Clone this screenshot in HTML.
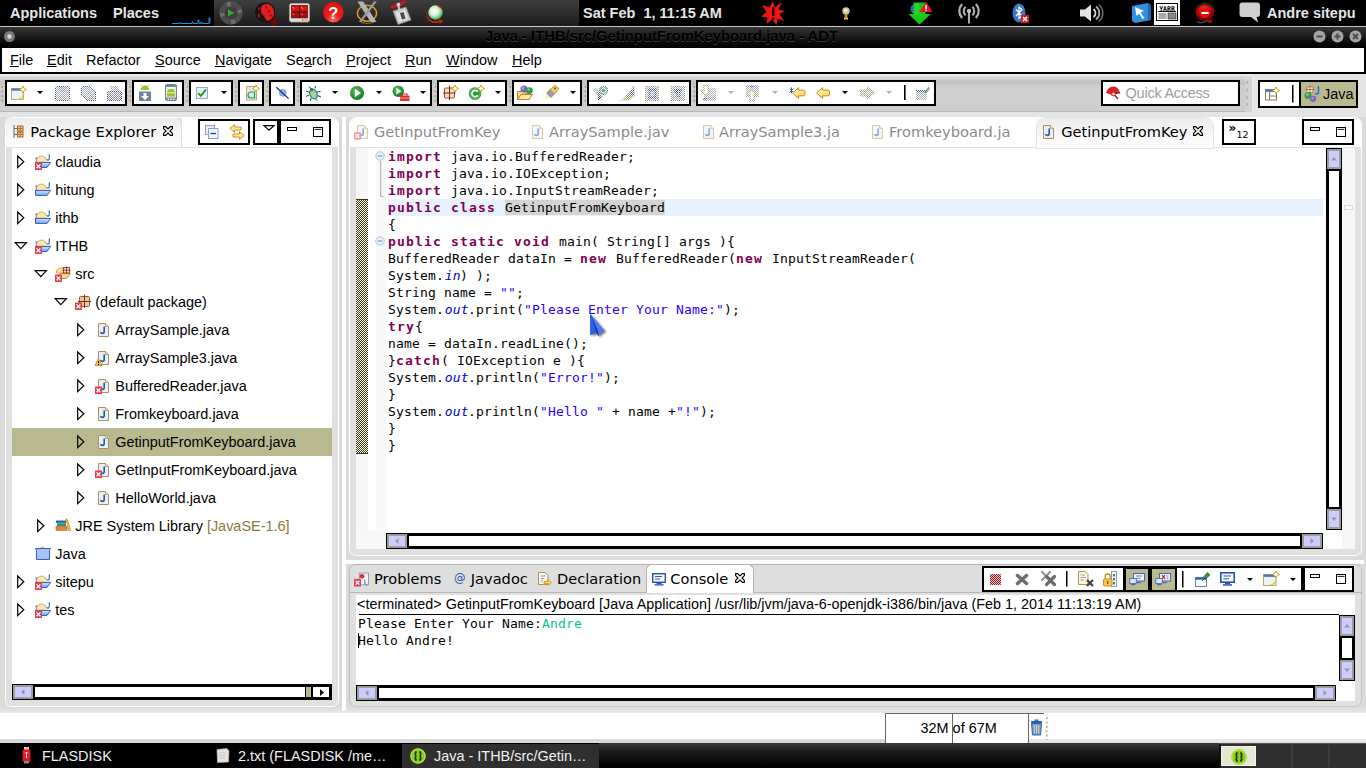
<!DOCTYPE html><html><head><meta charset="utf-8"><title>Java - ADT</title><style>
html,body{margin:0;padding:0;background:#e8e8e8;}
body{width:1366px;height:768px;overflow:hidden;position:relative;font-family:"Liberation Sans",sans-serif;font-size:15px;color:#000;}
div{position:absolute;box-sizing:border-box;}
svg{position:absolute;overflow:visible;}
.t{white-space:pre;line-height:1;}
.ui{font-family:"Liberation Sans",sans-serif;font-size:14.45px;}
.dj{font-family:"DejaVu Sans","Liberation Sans",sans-serif;font-size:15px;}
.mono{font-family:"DejaVu Sans Mono","Liberation Mono",monospace;font-size:13px;letter-spacing:0.174px;}
.bb{border:2px solid #000;background:#fff;}
.kw{color:#7f0055;font-weight:bold;letter-spacing:1.174px;}
.st{color:#2a00ff;}
.fi{color:#0000c0;font-style:italic;margin-left:0.7px;margin-right:-0.7px;}
u{text-decoration:underline;text-underline-offset:1.2px;text-decoration-thickness:1px;}
</style></head><body><div class="" style="left:0px;top:0px;width:1366px;height:27px;background:#000;"></div>
<div class="" style="left:214px;top:0px;width:365px;height:26px;background:linear-gradient(#3e3e3e,#1c1c1c);"></div>
<div class="" style="left:0px;top:26px;width:1366px;height:1px;background:#c8c8c8;"></div>
<div class="t ui" style="left:10px;top:6px;color:#e6e6e6;font-weight:bold;font-size:14.5px;">Applications</div>
<div class="t ui" style="left:113px;top:6px;color:#e6e6e6;font-weight:bold;font-size:14.5px;">Places</div>
<div class="t ui" style="left:583px;top:6px;color:#e6e6e6;font-weight:bold;font-size:14.5px;">Sat Feb  1, 11:15 AM</div>
<div class="t ui" style="left:1267px;top:6px;color:#e6e6e6;font-weight:bold;font-size:14.5px;">Andre sitepu</div>
<svg style="left:172px;top:17px" width="40" height="8" viewBox="0 0 40 8" ><path d="M0 6.5 H8 V5.5 H9 V6.5 H20 V5 H21 V6.5 H26 V3 H27 V6.5 H29 V5 H30 V6.5 H37 V1 H38 V6.5" fill="none" stroke="#1e8fe0" stroke-width="1"/></svg><svg style="left:219px;top:1px" width="24" height="24" viewBox="0 0 24 24" ><circle cx="12" cy="12" r="11.4" fill="#6c6c6c"/><g fill="#4c4c4c"><path d="M12 0.6 A11.4 11.4 0 0 1 22.5 8 L17.5 9.5 A6.5 6.5 0 0 0 12 5.5Z"/><path d="M23.4 12 A11.4 11.4 0 0 1 17 22.3 L15 17.6 A6.5 6.5 0 0 0 18.5 12Z" /><path d="M12 23.4 A11.4 11.4 0 0 1 1.5 16 L6.5 14.5 A6.5 6.5 0 0 0 12 18.5Z"/><path d="M0.6 12 A11.4 11.4 0 0 1 7 1.7 L9 6.4 A6.5 6.5 0 0 0 5.5 12Z"/></g><circle cx="12" cy="12" r="6.6" fill="#3c3c3c"/><path d="M9 8.6 L15.4 12 L9 15.4Z" fill="#2fa82f"/></svg><svg style="left:255px;top:2px" width="22" height="24" viewBox="0 0 22 24" ><rect x="16" y="16" width="6" height="7.5" fill="#6a0808"/><circle cx="10.2" cy="10.3" r="10.1" fill="#141414"/><path d="M7 3.5 Q10 1 13.5 2 Q17 3.5 18.5 7 Q20 11 18.5 14 Q17 17 14 18.5 Q11.5 19.5 10.5 17 Q9.5 14.5 8 13 Q5.5 11 6 8 Q6 5.5 7 3.5Z" fill="#e01c1c"/><path d="M2.5 12 Q4 11 5 13 Q5.5 16 4.5 16.5 Q3 15 2.5 12Z M3 6 Q5 4 5.5 6 Q4.5 8.5 3 8Z" fill="#b01212"/><path d="M10.5 4.5 Q12 4 12 6 Q11 7 10.5 4.5Z M13.5 8 Q15 8 14.5 10.5 Q13 10.5 13.5 8Z M15.5 12 Q17 12.5 16 15 Q15 14 15.5 12Z" fill="#300"/></svg><svg style="left:288.5px;top:2.5px" width="21" height="19.5" viewBox="0 0 21 19.5" ><rect x="0.5" y="0.5" width="20" height="18.5" rx="2" fill="#dcdcd4" stroke="#a8a8a0" stroke-width="0.8"/><rect x="2.2" y="2.2" width="16.6" height="13" fill="#4a0000"/><rect x="2.8" y="2.8" width="7.5" height="5.7" fill="#d41818"/><rect x="11.1" y="2.8" width="7.5" height="5.7" fill="#d41818"/><rect x="2.8" y="9.4" width="7.5" height="5.2" fill="#b00c0c"/><rect x="11.1" y="9.4" width="7.5" height="5.2" fill="#b00c0c"/><path d="M3.8 4 L5.5 5.8 M12 4 L13.8 5.8 M3.8 10.4 L5.2 12 M12 10.4 L13.4 12" stroke="#ffb0b0" stroke-width="0.8"/><rect x="13" y="16.4" width="1.4" height="1.2" fill="#e02020"/><rect x="15.5" y="16.6" width="3" height="0.8" fill="#888"/></svg><svg style="left:323px;top:1.5px" width="21" height="21" viewBox="0 0 21 21" ><defs><radialGradient id="hp" cx="0.5" cy="0.85" r="0.9"><stop offset="0" stop-color="#ff6a6a"/><stop offset="0.35" stop-color="#f21c1c"/><stop offset="1" stop-color="#e01010"/></radialGradient></defs><circle cx="10.3" cy="10.3" r="10.2" fill="url(#hp)"/><text x="10.3" y="17" text-anchor="middle" font-family="Liberation Sans,sans-serif" font-weight="bold" font-size="16.5" fill="#fff">?</text></svg><svg style="left:355px;top:1px" width="24" height="23" viewBox="0 0 24 23" ><ellipse cx="12" cy="12.3" rx="9.6" ry="8" fill="none" stroke="#c8780c" stroke-width="1.6"/><ellipse cx="12" cy="12.3" rx="9.6" ry="8" fill="none" stroke="#f0c040" stroke-width="0.6"/><path d="M2.4 0.5 H8.2 L21.5 21 H15.7Z" fill="#b4b4b4"/><path d="M19 0.5 H21.8 L6.5 21 H3.7Z" fill="#9a9a9a"/><path d="M6 21.5 Q12 23.5 19 21.5" stroke="#a89030" stroke-width="0.8" fill="none"/></svg><svg style="left:390px;top:0.5px" width="22" height="24" viewBox="0 0 22 24" ><path d="M3 10 L16 6 L21 19 L8 23.5Z" fill="#c4c4c4" stroke="#8c8c8c" stroke-width="0.8"/><path d="M5.5 11.5 L15 8.5 L18.5 18 L9 21Z" fill="#e0e0e0"/><path d="M10 12 L13.5 11 L15.5 17.5 L12 18.5Z" fill="#4a4a4a"/><path d="M2 6 L14.5 1.2" stroke="#d41414" stroke-width="3.2" stroke-linecap="round"/><path d="M7 4.1 L10 3" stroke="#dcdcdc" stroke-width="3.4"/><path d="M8 4 L10.5 12" stroke="#c8c8c8" stroke-width="2"/></svg><svg style="left:425px;top:3px" width="20" height="21" viewBox="0 0 20 21" ><defs><radialGradient id="bl" cx="0.42" cy="0.4" r="0.62"><stop offset="0" stop-color="#fff"/><stop offset="0.5" stop-color="#d4f0d4"/><stop offset="1" stop-color="#30b048"/></radialGradient></defs><circle cx="10.5" cy="9.5" r="7.2" fill="url(#bl)"/><path d="M2.6 6 Q0.5 12 5 16.5 Q9 19.5 14.5 17.6 L13.8 15.6 L18.4 18.2 L14.6 21 L14.6 19.4 Q8 21.5 3.6 17.4 Q-0.5 12.5 2.6 6Z" fill="#c8200c"/><path d="M12.5 1.5 L17.5 4.5 L15.5 5.2 L11.8 2.8Z" fill="#c8200c"/></svg><svg style="left:761px;top:1px" width="24" height="24" viewBox="0 0 24 24" ><path d="M12 0 L14 6.5 L21 1 L17.5 8.5 L24 10 L18.5 13 L23 20 L16.5 17.5 L15.5 24 L11 18.5 L5.5 23 L6.5 16.5 L0 15.5 L5.5 11 L1 4 L8.5 6.5Z" fill="#f01414"/><rect x="11" y="6" width="2.4" height="9" fill="#3a0000"/><rect x="11" y="16.5" width="2.4" height="2.4" fill="#3a0000"/></svg><svg style="left:842px;top:7px" width="8" height="14" viewBox="0 0 8 14" ><circle cx="4" cy="4" r="3.7" fill="#c8c4a0"/><circle cx="3.6" cy="3.4" r="1.8" fill="#ecead0"/><rect x="2.6" y="7.5" width="2.8" height="3" fill="#c09a18"/><rect x="2" y="10.5" width="4" height="2" fill="#e8c848"/></svg><svg style="left:908px;top:1px" width="26" height="24" viewBox="0 0 26 24" ><circle cx="7.5" cy="8" r="5" fill="#2a6ad0"/><path d="M5.5 1.5 H17.5 V13 H23 L11.5 23.5 L0.5 13 H5.5Z" fill="#18c818"/><path d="M6.5 2.5 H11 V13.5 H6.5Z" fill="#3adc3a" opacity="0.6"/><path d="M18 0.5 L24.5 11 H11.5Z" fill="#e81818"/><rect x="17.3" y="4" width="1.5" height="4" fill="#fff"/><rect x="17.3" y="8.7" width="1.5" height="1.4" fill="#fff"/></svg><svg style="left:958px;top:2px" width="22" height="22" viewBox="0 0 22 22" ><g fill="none" stroke="#b0b0b0" stroke-width="2.1"><path d="M4.2 2 A10 10 0 0 0 4.2 16"/><path d="M17.8 2 A10 10 0 0 1 17.8 16"/><path d="M7.6 4.8 A5.8 5.8 0 0 0 7.6 13.2"/><path d="M14.4 4.8 A5.8 5.8 0 0 1 14.4 13.2"/></g><circle cx="11" cy="9" r="2.2" fill="#c0c0c0"/><rect x="10.1" y="10" width="1.8" height="11.5" fill="#c0c0c0"/></svg><svg style="left:1012px;top:3px" width="20" height="21" viewBox="0 0 20 21" ><ellipse cx="7" cy="10" rx="6.5" ry="9.5" fill="#3a78c8"/><path d="M4 6.5 L10 13 L7 15.5 V4 L10 6.5 L4 13" fill="none" stroke="#fff" stroke-width="1.2"/><rect x="9" y="12" width="8" height="8" fill="#e01515"/><path d="M11 14 L15 18 M15 14 L11 18" stroke="#fff" stroke-width="1.6"/></svg><svg style="left:1079px;top:4px" width="24" height="18" viewBox="0 0 24 18" ><path d="M1 5.5 H6 L12 0.5 V17.5 L6 12.5 H1Z" fill="#e4e4e4"/><path d="M14.5 5 A5 5 0 0 1 14.5 13" fill="none" stroke="#d8d8d8" stroke-width="1.8"/><path d="M17 2.5 A8 8 0 0 1 17 15.5" fill="none" stroke="#aaa" stroke-width="1.8"/><path d="M19.8 0.5 A11 11 0 0 1 19.8 17.5" fill="none" stroke="#666" stroke-width="1.6"/></svg><svg style="left:1131px;top:3px" width="21" height="20" viewBox="0 0 21 20" ><path d="M1 3 L17 0 L20 2 V17 L4 20 L1 18Z" fill="#2f8fe0"/><path d="M17 0 L20 2 V17 L17 16Z" fill="#1a66b0"/><path d="M4 4 L13 8 L9.5 9.5 L13.5 15 L11.5 16 L8 10.5 L5.5 13Z" fill="#fff"/></svg><svg style="left:1154px;top:0px" width="26" height="25" viewBox="0 0 26 25" ><rect width="26" height="25" fill="#fff"/><rect x="2.5" y="3.5" width="21" height="17" fill="#fff" stroke="#000"/><text x="13" y="10.5" text-anchor="middle" font-family="DejaVu Sans Mono,monospace" font-weight="bold" font-size="6.5" fill="#000">YARR</text><rect x="4" y="11" width="18" height="1" fill="#000"/><rect x="4.5" y="13.5" width="8" height="1" fill="#555"/><rect x="4.5" y="15.5" width="8" height="1" fill="#555"/><rect x="4.5" y="17.5" width="8" height="1" fill="#555"/><rect x="14" y="13" width="8" height="6" fill="#888" stroke="#333" stroke-width="0.6"/></svg><svg style="left:1194px;top:2px" width="24" height="22" viewBox="0 0 24 22" ><defs><radialGradient id="rc" cx="0.45" cy="0.35" r="0.7"><stop offset="0" stop-color="#ff3030"/><stop offset="0.6" stop-color="#a80000"/><stop offset="1" stop-color="#300"/></radialGradient></defs><circle cx="11" cy="10" r="9.5" fill="url(#rc)"/><path d="M3 5 Q11 -2 19 5" fill="none" stroke="#222" stroke-width="2"/><circle cx="11" cy="11" r="5" fill="#e01010"/><rect x="7.5" y="10" width="7" height="2" fill="#fff"/><path d="M3 20 Q9 22 14 18" fill="none" stroke="#444" stroke-width="1.5"/><rect x="14" y="18" width="4" height="3" fill="#a00"/></svg><svg style="left:1239px;top:2px" width="22" height="21" viewBox="0 0 22 21" ><path d="M3.5 0.5 H18 Q21 0.5 21 3.5 V12 Q21 15 18 15 H17.5 L19 20.5 L12 15 H3.5 Q0.5 15 0.5 12 V3.5 Q0.5 0.5 3.5 0.5Z" fill="#d0d0d0"/></svg>
<div class="" style="left:0px;top:27px;width:1366px;height:21px;background:linear-gradient(#363636,#1e1e1e 40%,#0a0a0a 75%,#000);"></div>
<div class="t ui" style="left:485px;top:29.3px;font-weight:bold;font-size:14.8px;color:#000;text-shadow:0 1px 0 #3c3c3c;">Java - ITHB/src/GetinputFromKeyboard.java - ADT</div>
<svg style="left:3px;top:30px" width="13" height="13" viewBox="0 0 13 13" ><circle cx="6.5" cy="6.5" r="5.5" fill="#7a7a7a"/><circle cx="6.5" cy="6.5" r="2.2" fill="#d8d8d8"/></svg><svg style="left:1313px;top:30px" width="13" height="13" viewBox="0 0 13 13" ><circle cx="6.5" cy="6.5" r="6" fill="#a4a4a4"/><path d="M3.5 6.5 H9.5" stroke="#505050" stroke-width="2.2" fill="none"/></svg><svg style="left:1331px;top:30px" width="13" height="13" viewBox="0 0 13 13" ><circle cx="6.5" cy="6.5" r="6" fill="#a4a4a4"/><path d="M3.5 6.5 H9.5 M6.5 3.5 V9.5" stroke="#505050" stroke-width="2.2" fill="none"/></svg><svg style="left:1349px;top:30px" width="13" height="13" viewBox="0 0 13 13" ><circle cx="6.5" cy="6.5" r="6" fill="#a4a4a4"/><path d="M4 4 L9 9 M9 4 L4 9" stroke="#505050" stroke-width="2.2" fill="none"/></svg>
<div class="" style="left:0px;top:48px;width:1366px;height:26px;background:#000;"></div>
<div class="" style="left:2px;top:48px;width:1362px;height:24px;background:#fff;"></div>
<div class="t ui" style="left:10px;top:53px;"><u>F</u>ile</div>
<div class="t ui" style="left:47px;top:53px;"><u>E</u>dit</div>
<div class="t ui" style="left:86px;top:53px;">Refactor</div>
<div class="t ui" style="left:155px;top:53px;"><u>S</u>ource</div>
<div class="t ui" style="left:215px;top:53px;"><u>N</u>avigate</div>
<div class="t ui" style="left:286px;top:53px;">Se<u>a</u>rch</div>
<div class="t ui" style="left:346px;top:53px;"><u>P</u>roject</div>
<div class="t ui" style="left:405px;top:53px;"><u>R</u>un</div>
<div class="t ui" style="left:446px;top:53px;"><u>W</u>indow</div>
<div class="t ui" style="left:512px;top:53px;"><u>H</u>elp</div>
<div class="" style="left:0px;top:74px;width:1366px;height:38px;background:linear-gradient(#efefef 0px,#dadada 3px,#c8c8c8 6.5px,#c4c4c4 7px,#c4c4c4 11px,#cecece 11.5px,#cecece 36.8px,#b8b8b8 37px);"></div>
<div class="bb" style="left:5px;top:80px;width:122px;height:26px;"></div>
<div class="bb" style="left:132px;top:80px;width:52px;height:26px;"></div>
<div class="bb" style="left:189px;top:80px;width:44px;height:26px;"></div>
<div class="bb" style="left:238px;top:80px;width:26px;height:26px;"></div>
<div class="bb" style="left:269px;top:80px;width:26px;height:26px;"></div>
<div class="bb" style="left:300px;top:80px;width:132px;height:26px;"></div>
<div class="bb" style="left:437px;top:80px;width:70px;height:26px;"></div>
<div class="bb" style="left:512px;top:80px;width:70px;height:26px;"></div>
<div class="bb" style="left:587px;top:80px;width:104px;height:26px;"></div>
<div class="bb" style="left:696px;top:80px;width:240px;height:26px;"></div>
<div class="bb" style="left:1101px;top:80px;width:139px;height:26px;"></div>
<div class="t ui" style="left:1125.6px;top:85.9px;color:#9c9c9c;letter-spacing:-0.22px;">Quick Access</div>
<div class="" style="left:1245px;top:74px;width:8px;height:37.5px;background:linear-gradient(#efefef 0px,#dadada 3px,#d2d2d2 7px,#d4d4d4);"></div>
<div class="" style="left:1252px;top:74px;width:114px;height:38px;background:#e4e4e4;border-left:1px solid #ececec;"></div>
<div class="bb" style="left:1258px;top:80px;width:100px;height:28px;"></div>
<div class="" style="left:1299px;top:82px;width:2px;height:24px;background:#000;"></div>
<div class="" style="left:1301px;top:82px;width:55px;height:24px;background:#b9b98f;"></div>
<div class="t ui" style="left:1323px;top:87px;">Java</div>
<svg style="left:0px;top:0px" width="0" height="0" viewBox="0 0 0 0" ><defs><pattern id="stp" width="2" height="2" patternUnits="userSpaceOnUse"><rect width="2" height="2" fill="#fff"/><rect width="1" height="1" fill="#8890a4"/><rect x="1" y="1" width="1" height="1" fill="#8890a4"/></pattern><pattern id="stpl" width="2" height="2" patternUnits="userSpaceOnUse"><rect width="2" height="2" fill="#fff"/><rect width="1" height="1" fill="#aab2c2"/><rect x="1" y="1" width="1" height="1" fill="#aab2c2"/></pattern><pattern id="stpd" width="2" height="2" patternUnits="userSpaceOnUse"><rect width="2" height="2" fill="#fff"/><rect width="1" height="1" fill="#44548c"/><rect x="1" y="1" width="1" height="1" fill="#44548c"/></pattern><pattern id="stpy" width="2" height="2" patternUnits="userSpaceOnUse"><rect width="2" height="2" fill="#fff"/><rect width="1" height="1" fill="#a89858"/><rect x="1" y="1" width="1" height="1" fill="#a89858"/></pattern><pattern id="stpk" width="2" height="2" patternUnits="userSpaceOnUse"><rect width="2" height="2" fill="#fff"/><rect width="1" height="1" fill="#444"/><rect x="1" y="1" width="1" height="1" fill="#444"/></pattern></defs></svg><svg style="left:1246px;top:80px" width="3" height="27" viewBox="0 0 3 27" ><g fill="#bcb4a0"><rect x="0.3" y="1" width="1.7" height="3"/><rect x="0.3" y="8.5" width="1.7" height="3"/><rect x="0.3" y="16" width="1.7" height="3"/><rect x="0.3" y="23" width="1.7" height="3"/></g></svg><svg style="left:1px;top:85px" width="3" height="18" viewBox="0 0 3 18" ><g fill="#aca28a"><rect x="0.5" y="0.8" width="1.6" height="2.2"/><rect x="0.5" y="5.4" width="1.6" height="2.2"/><rect x="0.5" y="10" width="1.6" height="2.2"/><rect x="0.5" y="14.6" width="1.6" height="2.2"/></g></svg><svg style="left:128.5px;top:85px" width="3" height="18" viewBox="0 0 3 18" ><g fill="#aca28a"><rect x="0.5" y="0.8" width="1.6" height="2.2"/><rect x="0.5" y="5.4" width="1.6" height="2.2"/><rect x="0.5" y="10" width="1.6" height="2.2"/><rect x="0.5" y="14.6" width="1.6" height="2.2"/></g></svg><svg style="left:185.5px;top:85px" width="3" height="18" viewBox="0 0 3 18" ><g fill="#aca28a"><rect x="0.5" y="0.8" width="1.6" height="2.2"/><rect x="0.5" y="5.4" width="1.6" height="2.2"/><rect x="0.5" y="10" width="1.6" height="2.2"/><rect x="0.5" y="14.6" width="1.6" height="2.2"/></g></svg><svg style="left:234.5px;top:85px" width="3" height="18" viewBox="0 0 3 18" ><g fill="#aca28a"><rect x="0.5" y="0.8" width="1.6" height="2.2"/><rect x="0.5" y="5.4" width="1.6" height="2.2"/><rect x="0.5" y="10" width="1.6" height="2.2"/><rect x="0.5" y="14.6" width="1.6" height="2.2"/></g></svg><svg style="left:265.5px;top:85px" width="3" height="18" viewBox="0 0 3 18" ><g fill="#aca28a"><rect x="0.5" y="0.8" width="1.6" height="2.2"/><rect x="0.5" y="5.4" width="1.6" height="2.2"/><rect x="0.5" y="10" width="1.6" height="2.2"/><rect x="0.5" y="14.6" width="1.6" height="2.2"/></g></svg><svg style="left:296.5px;top:85px" width="3" height="18" viewBox="0 0 3 18" ><g fill="#aca28a"><rect x="0.5" y="0.8" width="1.6" height="2.2"/><rect x="0.5" y="5.4" width="1.6" height="2.2"/><rect x="0.5" y="10" width="1.6" height="2.2"/><rect x="0.5" y="14.6" width="1.6" height="2.2"/></g></svg><svg style="left:433.5px;top:85px" width="3" height="18" viewBox="0 0 3 18" ><g fill="#aca28a"><rect x="0.5" y="0.8" width="1.6" height="2.2"/><rect x="0.5" y="5.4" width="1.6" height="2.2"/><rect x="0.5" y="10" width="1.6" height="2.2"/><rect x="0.5" y="14.6" width="1.6" height="2.2"/></g></svg><svg style="left:508.5px;top:85px" width="3" height="18" viewBox="0 0 3 18" ><g fill="#aca28a"><rect x="0.5" y="0.8" width="1.6" height="2.2"/><rect x="0.5" y="5.4" width="1.6" height="2.2"/><rect x="0.5" y="10" width="1.6" height="2.2"/><rect x="0.5" y="14.6" width="1.6" height="2.2"/></g></svg><svg style="left:583.5px;top:85px" width="3" height="18" viewBox="0 0 3 18" ><g fill="#aca28a"><rect x="0.5" y="0.8" width="1.6" height="2.2"/><rect x="0.5" y="5.4" width="1.6" height="2.2"/><rect x="0.5" y="10" width="1.6" height="2.2"/><rect x="0.5" y="14.6" width="1.6" height="2.2"/></g></svg><svg style="left:692.5px;top:85px" width="3" height="18" viewBox="0 0 3 18" ><g fill="#aca28a"><rect x="0.5" y="0.8" width="1.6" height="2.2"/><rect x="0.5" y="5.4" width="1.6" height="2.2"/><rect x="0.5" y="10" width="1.6" height="2.2"/><rect x="0.5" y="14.6" width="1.6" height="2.2"/></g></svg><svg style="left:11px;top:86px" width="16" height="16" viewBox="0 0 16 16" ><rect x="0.5" y="2.5" width="12" height="11" fill="#eaf2fc" stroke="#c8a850"/><rect x="0.5" y="2.5" width="12" height="2.2" fill="#4a78c0"/><path d="M12.5 8 Q12 13 6 13.5" fill="none" stroke="#e8c040" stroke-width="1.2"/><path d="M12 0 l1.2 2.3 l2.3 1.2 l-2.3 1.2 l-1.2 2.3 l-1.2 -2.3 l-2.3 -1.2 l2.3 -1.2Z" fill="#fffde8" stroke="#c8a018" stroke-width="1"/></svg><svg style="left:37px;top:91px" width="6" height="3" viewBox="0 0 6 3" ><path d="M0 0 H6 L3 3Z" fill="#000"/></svg><svg style="left:55px;top:86px" width="15" height="15" viewBox="0 0 15 15" ><path d="M1.5 0.5 H13.5 Q14.5 0.5 14.5 1.5 V13.5 Q14.5 14.5 13.5 14.5 H1.5 Q0.5 14.5 0.5 13.5 V1.5 Q0.5 0.5 1.5 0.5Z" fill="url(#stpl)" stroke="url(#stpd)" stroke-width="1"/><rect x="4" y="1" width="7" height="5" fill="url(#stp)"/><rect x="4" y="9" width="7" height="5" fill="url(#stpy)" opacity="0.6"/></svg><svg style="left:81px;top:86px" width="15" height="15" viewBox="0 0 15 15" ><path d="M1.5 0.5 H9 L14.5 6 V14.5 H6 L0.5 9 V1.5Z" fill="url(#stpl)" stroke="url(#stpd)" stroke-width="1"/><rect x="8" y="8" width="5" height="6" fill="url(#stpy)" opacity="0.6"/></svg><svg style="left:107px;top:86px" width="15" height="15" viewBox="0 0 15 15" ><path d="M4 0.5 H9 L12 3 V6 H4Z" fill="url(#stpl)" stroke="url(#stpy)" stroke-width="1"/><path d="M1.5 5.5 H13.5 Q14.5 5.5 14.5 6.5 V14.5 H0.5 V6.5 Q0.5 5.5 1.5 5.5Z" fill="url(#stp)" stroke="url(#stpd)" stroke-width="1"/></svg><svg style="left:139px;top:84px" width="12" height="17" viewBox="0 0 12 17" ><path d="M1.5 6 a4.5 4.4 0 0 1 9 0Z" fill="#9cc42a"/><path d="M3.3 2.4 l-1.2 -1.8 M8.7 2.4 l1.2 -1.8" stroke="#9cc42a" stroke-width="0.9"/><rect x="0" y="7.5" width="12" height="9.5" fill="#6f8496"/><path d="M4.5 9 H7.5 V12 H10 L6 16 L2 12 H4.5Z" fill="#fff"/></svg><svg style="left:165px;top:84px" width="12" height="17" viewBox="0 0 12 17" ><rect x="0" y="0" width="12" height="17" rx="2" fill="#6f8496"/><rect x="1.2" y="3" width="9.6" height="10.5" fill="#fff"/><path d="M2 8.5 a4 3.8 0 0 1 8 0Z" fill="#9cc42a"/><path d="M3.6 5.6 l-1 -1.5 M8.4 5.6 l1 -1.5" stroke="#9cc42a" stroke-width="0.8"/><rect x="2" y="9.3" width="8" height="3.4" fill="#9cc42a"/><rect x="8" y="1" width="1.3" height="1.3" fill="#4c4"/><rect x="9.7" y="1" width="1.3" height="1.3" fill="#4c4"/><rect x="2.5" y="14.6" width="1.6" height="1.3" fill="#fff"/><rect x="5.2" y="14.6" width="1.6" height="1.3" fill="#fff"/><rect x="7.9" y="14.6" width="1.6" height="1.3" fill="#fff"/></svg><svg style="left:196px;top:87px" width="12" height="12" viewBox="0 0 12 12" ><rect x="0.5" y="0.5" width="11" height="11" fill="#e8eefa" stroke="#9aa8cc"/><path d="M2.2 6 L4.8 8.8 L10 2.6" fill="none" stroke="#1c9a1c" stroke-width="1.8"/></svg><svg style="left:220.5px;top:91px" width="6" height="3" viewBox="0 0 6 3" ><path d="M0 0 H6 L3 3Z" fill="#000"/></svg><svg style="left:246px;top:85px" width="14" height="16" viewBox="0 0 14 16" ><rect x="0.5" y="1.5" width="10" height="13.5" fill="#dbe8f8" stroke="#e0a060"/><path d="M8.5 7 H5 A3 3 0 0 0 5 13 H8.5 V7" fill="none" stroke="#18a040" stroke-width="1.2"/><path d="M10 0 l1.2 2.3 l2.3 1.2 l-2.3 1.2 l-1.2 2.3 l-1.2 -2.3 l-2.3 -1.2 l2.3 -1.2Z" fill="#fffde8" stroke="#c8a018" stroke-width="1"/></svg><svg style="left:276px;top:87px" width="13" height="12" viewBox="0 0 13 12" ><circle cx="6.8" cy="5.8" r="3.5" fill="#8ab4dc" stroke="#6a98c8" stroke-width="0.6"/><path d="M0.3 0.3 L12.6 11.6" stroke="#1a1a90" stroke-width="1.2"/></svg><svg style="left:306px;top:86px" width="15" height="15" viewBox="0 0 15 15" ><g stroke="#1a3a4a" stroke-width="1" fill="none"><path d="M5 3 L3 0.5 M9 2.5 L9.5 0 M3.5 6.5 L0 5 M3 9 L0 10.5 M5 12 L4.5 15 M11 6 L14.5 5.5 M11.5 9.5 L15 11 M9 12 L11 14.5"/></g><ellipse cx="7.5" cy="8" rx="3.6" ry="5" transform="rotate(-25 7.5 8)" fill="#a8d090" stroke="#1a7a8a" stroke-width="1.1"/><circle cx="5.8" cy="3.6" r="1.6" fill="#2a6a6a"/></svg><svg style="left:332px;top:91px" width="6" height="3" viewBox="0 0 6 3" ><path d="M0 0 H6 L3 3Z" fill="#000"/></svg><svg style="left:350px;top:86px" width="14" height="14" viewBox="0 0 14 14" ><defs><radialGradient id="rg" cx="0.4" cy="0.35" r="0.75"><stop offset="0" stop-color="#58c058"/><stop offset="0.7" stop-color="#1e8a2a"/><stop offset="1" stop-color="#0e6a1a"/></radialGradient></defs><circle cx="7" cy="7" r="7" fill="url(#rg)"/><path d="M4.8 2.8 L11 7 L4.8 11.2Z" fill="#fff"/></svg><svg style="left:376px;top:91px" width="6" height="3" viewBox="0 0 6 3" ><path d="M0 0 H6 L3 3Z" fill="#000"/></svg><svg style="left:392px;top:85px" width="18" height="16" viewBox="0 0 18 16" ><circle cx="6.2" cy="6.2" r="5.7" fill="url(#rg)"/><path d="M4.4 2.8 L9.4 6.2 L4.4 9.6Z" fill="#fff"/><rect x="8" y="10.5" width="9.5" height="5.5" rx="0.8" fill="#d83030"/><path d="M10.5 10.5 V9 H15 V10.5" fill="none" stroke="#c02020" stroke-width="1.1"/><rect x="8" y="12.6" width="9.5" height="0.9" fill="#f4b0b0"/></svg><svg style="left:420px;top:91px" width="6" height="3" viewBox="0 0 6 3" ><path d="M0 0 H6 L3 3Z" fill="#000"/></svg><svg style="left:443px;top:85px" width="16" height="16" viewBox="0 0 16 16" ><rect x="1.5" y="3" width="10" height="10" rx="1" fill="#f4dcc0" stroke="#a05030" stroke-width="1"/><path d="M6.5 0.5 V15 M0 8 H12.5" stroke="#7a3018" stroke-width="1"/><path d="M12 0 l1.2 2.3 l2.3 1.2 l-2.3 1.2 l-1.2 2.3 l-1.2 -2.3 l-2.3 -1.2 l2.3 -1.2Z" fill="#fffde8" stroke="#c8a018" stroke-width="1"/></svg><svg style="left:468px;top:85px" width="17" height="16" viewBox="0 0 17 16" ><circle cx="7" cy="8.5" r="6.3" fill="#2e9a3e"/><circle cx="7" cy="8.5" r="5" fill="none" stroke="#6cc870" stroke-width="0.8"/><path d="M9.8 6.8 A3.2 3.2 0 1 0 9.8 10.2" fill="none" stroke="#fff" stroke-width="1.7"/><path d="M13 0 l1.2 2.3 l2.3 1.2 l-2.3 1.2 l-1.2 2.3 l-1.2 -2.3 l-2.3 -1.2 l2.3 -1.2Z" fill="#fffde8" stroke="#c8a018" stroke-width="1"/></svg><svg style="left:495px;top:91px" width="6" height="3" viewBox="0 0 6 3" ><path d="M0 0 H6 L3 3Z" fill="#000"/></svg><svg style="left:517px;top:85px" width="17" height="15" viewBox="0 0 17 15" ><path d="M0.5 6.5 H6 L7.5 8 H12 V14.5 H0.5Z" fill="#f6d888" stroke="#c08020"/><path d="M0.5 14.5 L4 9.5 H15.5 L12 14.5Z" fill="#fbe8a8" stroke="#c08020"/><circle cx="7" cy="4" r="3.6" fill="#7a68c0"/><circle cx="6" cy="3" r="1.3" fill="#b0a4e0"/><circle cx="12.4" cy="5.6" r="3.4" fill="#2e9a4e"/><circle cx="11.6" cy="4.6" r="1.2" fill="#80d090"/></svg><svg style="left:543px;top:85px" width="17" height="15" viewBox="0 0 17 15" ><path d="M1 14 L4 8 L8 12Z" fill="#fff0a0"/><path d="M3.5 8 L7 4.5 L11.5 9 L8 12.5Z" fill="#9a9aa8" stroke="#707080" stroke-width="0.6"/><path d="M7 4.5 L12 0.5 L16 3.5 L11.5 9Z" fill="#f4c868" stroke="#c08828" stroke-width="0.8"/><circle cx="12" cy="3.4" r="0.9" fill="#3050a0"/></svg><svg style="left:570px;top:91px" width="6" height="3" viewBox="0 0 6 3" ><path d="M0 0 H6 L3 3Z" fill="#000"/></svg><svg style="left:593px;top:86px" width="16" height="15" viewBox="0 0 16 15" ><path d="M0 3 L4 2 L6 6 L3 8 L1 7Z" fill="url(#stpl)"/><circle cx="10.5" cy="4.5" r="4.5" fill="url(#stpl)"/><circle cx="10.5" cy="4.5" r="4" fill="none" stroke="#3a8a4a" stroke-width="1.2" stroke-dasharray="1 1"/><circle cx="10.5" cy="4.5" r="1.3" fill="#3a8a4a" opacity="0.8"/><path d="M4.5 6.5 L9.5 11 L5 15Z" fill="url(#stpk)"/></svg><svg style="left:619px;top:86px" width="16" height="15" viewBox="0 0 16 15" ><path d="M0 14 H3 L9 7.5 L14 11 L10 14.5 H0Z" fill="url(#stpy)"/><path d="M9 7.5 L14.5 0 L15.5 1 V10 L14 11Z" fill="url(#stpk)" opacity="0.7"/></svg><svg style="left:645px;top:86px" width="14" height="15" viewBox="0 0 14 15" ><rect x="0.5" y="0.5" width="13" height="14" fill="url(#stpl)" stroke="url(#stpy)" stroke-width="1"/><rect x="4.5" y="3.5" width="6" height="8" fill="none" stroke="url(#stpd)" stroke-width="2"/></svg><svg style="left:671px;top:86px" width="14" height="15" viewBox="0 0 14 15" ><rect x="0.5" y="0.5" width="13" height="14" fill="url(#stpl)" stroke="url(#stpy)" stroke-width="1"/><path d="M3 3 H11 V5 H9.5 V12 H8 V5 H7 V12 H5.5 V7 Q3 7 3 5Z" fill="url(#stpd)"/></svg><svg style="left:701px;top:85px" width="15" height="16" viewBox="0 0 15 16" ><rect x="3" y="3" width="12" height="13" fill="url(#stpl)"/><path d="M3 0.5 H7 V5.5 H10 L5 10.5 L0 5.5 H3Z" fill="#fff" stroke="url(#stpy)" stroke-width="1.4"/><rect x="2" y="13" width="4" height="2" fill="url(#stpd)"/></svg><svg style="left:728px;top:91px" width="6" height="3" viewBox="0 0 6 3" ><path d="M0 0 H6 L3 3Z" fill="#b0b0b0"/></svg><svg style="left:745px;top:85px" width="14" height="16" viewBox="0 0 14 16" ><rect x="1" y="0" width="13" height="12" fill="url(#stpl)"/><path d="M5 15.5 H9 V10 H12 L7 4.5 L2 10 H5Z" fill="#fff" stroke="url(#stpy)" stroke-width="1.4"/><rect x="5" y="0.5" width="3" height="2" fill="url(#stpd)"/></svg><svg style="left:772px;top:91px" width="6" height="3" viewBox="0 0 6 3" ><path d="M0 0 H6 L3 3Z" fill="#b0b0b0"/></svg><svg style="left:789px;top:87px" width="17" height="12" viewBox="0 0 17 12" ><defs><linearGradient id="ag" x1="0" y1="0" x2="0.6" y2="1"><stop offset="0" stop-color="#fffbe0"/><stop offset="1" stop-color="#fcd458"/></linearGradient></defs><path d="M0.5 1.5 L4.5 5.5 M4.5 1.5 L0.5 5.5 M2.5 0.5 V6.5" stroke="#2050b0" stroke-width="0.9"/><path d="M3.6 6 L9.6 0.6 V3.2 H14.5 Q16 3.2 16 4.6 V7.4 Q16 8.8 14.5 8.8 H9.6 V11.4Z" fill="url(#ag)" stroke="#c88a10" stroke-width="1"/></svg><svg style="left:816px;top:87px" width="15" height="12" viewBox="0 0 15 12" ><path d="M0.6 6 L6.6 0.6 V3.2 H12 Q13.5 3.2 13.5 4.6 V7.4 Q13.5 8.8 12 8.8 H6.6 V11.4Z" fill="url(#ag)" stroke="#c88a10" stroke-width="1"/></svg><svg style="left:842px;top:91px" width="6" height="3" viewBox="0 0 6 3" ><path d="M0 0 H6 L3 3Z" fill="#000"/></svg><svg style="left:860px;top:87px" width="15" height="12" viewBox="0 0 15 12" ><path d="M13.8 6 L7.8 0.8 V3.4 H1.5 Q0.6 3.4 0.6 4.4 V7.6 Q0.6 8.6 1.5 8.6 H7.8 V11.2Z" fill="url(#stpl)" stroke="url(#stpy)" stroke-width="1.6"/></svg><svg style="left:886px;top:91px" width="6" height="3" viewBox="0 0 6 3" ><path d="M0 0 H6 L3 3Z" fill="#b0b0b0"/></svg><svg style="left:903.5px;top:85px" width="2" height="15" viewBox="0 0 2 15" ><rect width="1.6" height="15" fill="#000"/></svg><svg style="left:916px;top:86px" width="14" height="14" viewBox="0 0 14 14" ><rect x="0" y="4" width="11" height="10" fill="url(#stpl)"/><rect x="0" y="4" width="11" height="2" fill="url(#stpd)"/><path d="M8 6.5 L12.5 0.5 L14 3 L10 7.5Z" fill="#3a8a3a" opacity="0.65"/></svg><svg style="left:1105px;top:85px" width="16" height="15" viewBox="0 0 16 15" ><path d="M1 8 Q3 1 9 1.5 Q13 2 14.5 6.5 Q9 6 6 9.5Z" fill="#d82020"/><path d="M6 9.5 Q9 6 14.5 6.5 L15.5 8.5 Q10 8 7 11Z" fill="#a01010"/><path d="M9 9.5 L13 14" stroke="#c02020" stroke-width="1.6"/><circle cx="8.5" cy="9" r="1.8" fill="#f8d8d8" stroke="#c02020" stroke-width="0.8"/></svg><svg style="left:1265px;top:87px" width="15" height="14" viewBox="0 0 15 14" ><rect x="0.5" y="2.5" width="11" height="10.5" fill="#fff" stroke="#8a7a50"/><rect x="0.5" y="2.5" width="11" height="2.4" fill="#4a78c0"/><path d="M4.5 5 V13 M4.5 9 H11.5" stroke="#8a7a50" stroke-width="1"/><path d="M11 0 l1.2 2.3 l2.3 1.2 l-2.3 1.2 l-1.2 2.3 l-1.2 -2.3 l-2.3 -1.2 l2.3 -1.2Z" fill="#fffde8" stroke="#c8a018" stroke-width="1"/></svg><svg style="left:1292.4px;top:84.5px" width="2" height="18" viewBox="0 0 2 18" ><rect width="1.5" height="17.5" fill="#000"/></svg><svg style="left:1304px;top:84px" width="17" height="18" viewBox="0 0 17 18" ><rect x="3" y="3" width="6" height="5.5" fill="#f8e8d8" stroke="#b07050" stroke-width="0.8"/><path d="M6 1.5 V9 M1.5 5.5 H10.5" stroke="#a05838" stroke-width="0.8"/><circle cx="4" cy="11.5" r="3.5" fill="#3aa050"/><circle cx="3.3" cy="10.6" r="1.4" fill="#7acc88"/><circle cx="9" cy="14.8" r="3.2" fill="#7a68c0"/><circle cx="8.4" cy="14" r="1.2" fill="#a89ae0"/><path d="M14.5 2 V8 Q14.5 10 12.7 10 Q11.6 10 11.5 9" fill="none" stroke="#2a6ac8" stroke-width="1.4"/></svg>
<div class="" style="left:0px;top:112px;width:1366px;height:601px;background:#dbdbdb;"></div>
<div class="" style="left:0px;top:707px;width:1366px;height:6px;background:linear-gradient(#dcdcdc,#e8e8e8);"></div>
<div class="" style="left:0px;top:112px;width:1366px;height:5px;background:#e4e4e4;"></div>
<div class="" style="left:342px;top:117px;width:4px;height:594px;background:#fff;"></div>
<div class="" style="left:346px;top:560px;width:1018px;height:4px;background:#fff;"></div>
<div class="" style="left:5px;top:117px;width:334px;height:590px;background:#e0e0e0;border:1px solid #fff;border-radius:7px;"></div>
<div class="" style="left:6px;top:118px;width:176px;height:30px;background:linear-gradient(#ececec,#fff);border-radius:6px 8px 0 0;border-right:1px solid #dcdcea;"></div>
<div class="" style="left:182px;top:118px;width:156px;height:30px;background:#fff;border-radius:0 6px 0 0;"></div>
<div class="" style="left:12px;top:148px;width:320px;height:552px;background:#fff;"></div>
<div class="t dj" style="left:30.3px;top:125.2px;font-size:14.6px;">Package Explorer</div>
<div class="bb" style="left:198px;top:119px;width:52px;height:26px;"></div>
<div class="bb" style="left:253px;top:119px;width:78px;height:26px;"></div>
<div class="" style="left:277px;top:119px;width:4px;height:26px;background:#000;"></div>
<svg style="left:16.5px;top:154.5px" width="9" height="15"><path d="M0.7 1 L6.8 6.8 L0.7 12.6Z" fill="none" stroke="#000" stroke-width="1.2"/></svg>
<svg style="left:35px;top:154px" width="16" height="16" viewBox="0 0 16 16" ><path d="M2.8 4 L4.3 2.2 H8.3 L9.8 4" fill="#fdf0c0" stroke="#c8a050" stroke-width="0.9"/><rect x="2" y="4" width="9.5" height="4.3" fill="#fce8a0"/><path d="M0.3 4 H2.8 M1.3 4 V8.3 M9.8 4 H10.6" stroke="#6a60a0" stroke-width="0.9" fill="none"/><path d="M0.5 8.4 H15.6 L12 13.4 H0.5Z" fill="#8cbcf8" stroke="#2a40b0" stroke-width="0.9"/><path d="M1 8.9 H14.6 L13.2 10.8 H1Z" fill="#b4d8ff"/><path d="M14.3 0.3 V4.6 Q14.3 6.2 12.9 6.2 Q11.7 6.2 11.6 5" fill="none" stroke="#2a6aa0" stroke-width="1.15"/><rect x="0" y="8.5" width="7" height="7.5" fill="#e04050"/><path d="M1.6 10.4 L5.4 14.2 M5.4 10.4 L1.6 14.2" stroke="#fff" stroke-width="1.3"/></svg>
<div class="t ui" style="left:55.3px;top:154.5px;">claudia</div>
<svg style="left:16.5px;top:182.5px" width="9" height="15"><path d="M0.7 1 L6.8 6.8 L0.7 12.6Z" fill="none" stroke="#000" stroke-width="1.2"/></svg>
<svg style="left:35px;top:182px" width="16" height="16" viewBox="0 0 16 16" ><path d="M2.8 4 L4.3 2.2 H8.3 L9.8 4" fill="#fdf0c0" stroke="#c8a050" stroke-width="0.9"/><rect x="2" y="4" width="9.5" height="4.3" fill="#fce8a0"/><path d="M0.3 4 H2.8 M1.3 4 V8.3 M9.8 4 H10.6" stroke="#6a60a0" stroke-width="0.9" fill="none"/><path d="M0.5 8.4 H15.6 L12 13.4 H0.5Z" fill="#8cbcf8" stroke="#2a40b0" stroke-width="0.9"/><path d="M1 8.9 H14.6 L13.2 10.8 H1Z" fill="#b4d8ff"/><path d="M14.3 0.3 V4.6 Q14.3 6.2 12.9 6.2 Q11.7 6.2 11.6 5" fill="none" stroke="#2a6aa0" stroke-width="1.15"/></svg>
<div class="t ui" style="left:55.3px;top:182.5px;">hitung</div>
<svg style="left:16.5px;top:210.5px" width="9" height="15"><path d="M0.7 1 L6.8 6.8 L0.7 12.6Z" fill="none" stroke="#000" stroke-width="1.2"/></svg>
<svg style="left:35px;top:210px" width="16" height="16" viewBox="0 0 16 16" ><path d="M2.8 4 L4.3 2.2 H8.3 L9.8 4" fill="#fdf0c0" stroke="#c8a050" stroke-width="0.9"/><rect x="2" y="4" width="9.5" height="4.3" fill="#fce8a0"/><path d="M0.3 4 H2.8 M1.3 4 V8.3 M9.8 4 H10.6" stroke="#6a60a0" stroke-width="0.9" fill="none"/><path d="M0.5 8.4 H15.6 L12 13.4 H0.5Z" fill="#8cbcf8" stroke="#2a40b0" stroke-width="0.9"/><path d="M1 8.9 H14.6 L13.2 10.8 H1Z" fill="#b4d8ff"/><path d="M14.3 0.3 V4.6 Q14.3 6.2 12.9 6.2 Q11.7 6.2 11.6 5" fill="none" stroke="#2a6aa0" stroke-width="1.15"/></svg>
<div class="t ui" style="left:55.3px;top:210.5px;">ithb</div>
<svg style="left:14px;top:242px" width="14" height="9"><path d="M1.2 0.7 H12.4 L6.8 6.6Z" fill="none" stroke="#000" stroke-width="1.2"/></svg>
<svg style="left:35px;top:238px" width="16" height="16" viewBox="0 0 16 16" ><path d="M2.8 4 L4.3 2.2 H8.3 L9.8 4" fill="#fdf0c0" stroke="#c8a050" stroke-width="0.9"/><rect x="2" y="4" width="9.5" height="4.3" fill="#fce8a0"/><path d="M0.3 4 H2.8 M1.3 4 V8.3 M9.8 4 H10.6" stroke="#6a60a0" stroke-width="0.9" fill="none"/><path d="M0.5 8.4 H15.6 L12 13.4 H0.5Z" fill="#8cbcf8" stroke="#2a40b0" stroke-width="0.9"/><path d="M1 8.9 H14.6 L13.2 10.8 H1Z" fill="#b4d8ff"/><path d="M14.3 0.3 V4.6 Q14.3 6.2 12.9 6.2 Q11.7 6.2 11.6 5" fill="none" stroke="#2a6aa0" stroke-width="1.15"/><rect x="0" y="8.5" width="7" height="7.5" fill="#e04050"/><path d="M1.6 10.4 L5.4 14.2 M5.4 10.4 L1.6 14.2" stroke="#fff" stroke-width="1.3"/></svg>
<div class="t ui" style="left:55.3px;top:238.5px;">ITHB</div>
<svg style="left:34px;top:270px" width="14" height="9"><path d="M1.2 0.7 H12.4 L6.8 6.6Z" fill="none" stroke="#000" stroke-width="1.2"/></svg>
<svg style="left:55px;top:266px" width="16" height="16" viewBox="0 0 16 16" ><path d="M1.5 5 Q1.5 3.5 3 3.5 L4.5 2 H8 L9.5 3.5 V7 H1.5Z" fill="#f8dc90" stroke="#c8a050" stroke-width="0.8"/><path d="M1.5 12.5 H11.5 L15.5 7.5 H5Z" fill="#f4d898" stroke="#b88a30" stroke-width="0.9"/><rect x="8.5" y="1.5" width="6" height="5.5" fill="#f4dcc0" stroke="#7a3018" stroke-width="0.8"/><path d="M11.5 0.5 V8 M7.5 4.2 H15.5" stroke="#7a3018" stroke-width="0.8"/><rect x="0" y="8.5" width="7" height="7.5" fill="#e04050"/><path d="M1.6 10.4 L5.4 14.2 M5.4 10.4 L1.6 14.2" stroke="#fff" stroke-width="1.3"/></svg>
<div class="t ui" style="left:75.3px;top:266.5px;">src</div>
<svg style="left:54px;top:298px" width="14" height="9"><path d="M1.2 0.7 H12.4 L6.8 6.6Z" fill="none" stroke="#000" stroke-width="1.2"/></svg>
<svg style="left:75px;top:294px" width="16" height="16" viewBox="0 0 16 16" ><rect x="4.5" y="2.5" width="10" height="10" rx="1" fill="#ecc8a0" stroke="#a05830" stroke-width="1"/><path d="M9.5 0.5 V14 M3 7.5 H16" stroke="#7a3018" stroke-width="1"/><rect x="0" y="8.5" width="7" height="7.5" fill="#e04050"/><path d="M1.6 10.4 L5.4 14.2 M5.4 10.4 L1.6 14.2" stroke="#fff" stroke-width="1.3"/></svg>
<div class="t ui" style="left:95.3px;top:294.5px;">(default package)</div>
<svg style="left:76.5px;top:322.5px" width="9" height="15"><path d="M0.7 1 L6.8 6.8 L0.7 12.6Z" fill="none" stroke="#000" stroke-width="1.2"/></svg>
<svg style="left:95px;top:322px" width="16" height="16" viewBox="0 0 16 16" ><g transform="translate(0,1)"><path d="M3.5 0.5 H10.5 L13.5 3.5 V13.5 H3.5Z" fill="#e6eefa" stroke="#b09050" stroke-width="1"/><path d="M10.5 0.5 V3.5 H13.5" fill="#f4e8c8" stroke="#b09050" stroke-width="0.8"/><path d="M9.2 3.5 V8.6 Q9.2 10.4 7.4 10.4 Q5.8 10.4 5.8 9" fill="none" stroke="#2a5a9a" stroke-width="1.6"/></g></svg>
<div class="t ui" style="left:115.3px;top:322.5px;">ArraySample.java</div>
<svg style="left:76.5px;top:350.5px" width="9" height="15"><path d="M0.7 1 L6.8 6.8 L0.7 12.6Z" fill="none" stroke="#000" stroke-width="1.2"/></svg>
<svg style="left:95px;top:350px" width="16" height="16" viewBox="0 0 16 16" ><g transform="translate(0,1)"><path d="M3.5 0.5 H10.5 L13.5 3.5 V13.5 H3.5Z" fill="#e6eefa" stroke="#b09050" stroke-width="1"/><path d="M10.5 0.5 V3.5 H13.5" fill="#f4e8c8" stroke="#b09050" stroke-width="0.8"/><path d="M9.2 3.5 V8.6 Q9.2 10.4 7.4 10.4 Q5.8 10.4 5.8 9" fill="none" stroke="#2a5a9a" stroke-width="1.6"/></g><path d="M3.5 8.5 L7 15.5 H0Z" fill="#f8c840" stroke="#c08818" stroke-width="0.8"/><rect x="3" y="11" width="1" height="2.4" fill="#000"/><rect x="3" y="14" width="1" height="0.9" fill="#000"/></svg>
<div class="t ui" style="left:115.3px;top:350.5px;">ArraySample3.java</div>
<svg style="left:76.5px;top:378.5px" width="9" height="15"><path d="M0.7 1 L6.8 6.8 L0.7 12.6Z" fill="none" stroke="#000" stroke-width="1.2"/></svg>
<svg style="left:95px;top:378px" width="16" height="16" viewBox="0 0 16 16" ><g transform="translate(0,1)"><path d="M3.5 0.5 H10.5 L13.5 3.5 V13.5 H3.5Z" fill="#e6eefa" stroke="#b09050" stroke-width="1"/><path d="M10.5 0.5 V3.5 H13.5" fill="#f4e8c8" stroke="#b09050" stroke-width="0.8"/><path d="M9.2 3.5 V8.6 Q9.2 10.4 7.4 10.4 Q5.8 10.4 5.8 9" fill="none" stroke="#2a5a9a" stroke-width="1.6"/></g><rect x="0" y="8.5" width="7" height="7.5" fill="#e04050"/><path d="M1.6 10.4 L5.4 14.2 M5.4 10.4 L1.6 14.2" stroke="#fff" stroke-width="1.3"/></svg>
<div class="t ui" style="left:115.3px;top:378.5px;">BufferedReader.java</div>
<svg style="left:76.5px;top:406.5px" width="9" height="15"><path d="M0.7 1 L6.8 6.8 L0.7 12.6Z" fill="none" stroke="#000" stroke-width="1.2"/></svg>
<svg style="left:95px;top:406px" width="16" height="16" viewBox="0 0 16 16" ><g transform="translate(0,1)"><path d="M3.5 0.5 H10.5 L13.5 3.5 V13.5 H3.5Z" fill="#e6eefa" stroke="#b09050" stroke-width="1"/><path d="M10.5 0.5 V3.5 H13.5" fill="#f4e8c8" stroke="#b09050" stroke-width="0.8"/><path d="M9.2 3.5 V8.6 Q9.2 10.4 7.4 10.4 Q5.8 10.4 5.8 9" fill="none" stroke="#2a5a9a" stroke-width="1.6"/></g></svg>
<div class="t ui" style="left:115.3px;top:406.5px;">Fromkeyboard.java</div>
<div class="" style="left:12px;top:428px;width:320px;height:28px;background:#b9b98f;"></div>
<svg style="left:76.5px;top:434.5px" width="9" height="15"><path d="M0.7 1 L6.8 6.8 L0.7 12.6Z" fill="none" stroke="#000" stroke-width="1.2"/></svg>
<svg style="left:95px;top:434px" width="16" height="16" viewBox="0 0 16 16" ><g transform="translate(0,1)"><path d="M3.5 0.5 H10.5 L13.5 3.5 V13.5 H3.5Z" fill="#e6eefa" stroke="#b09050" stroke-width="1"/><path d="M10.5 0.5 V3.5 H13.5" fill="#f4e8c8" stroke="#b09050" stroke-width="0.8"/><path d="M9.2 3.5 V8.6 Q9.2 10.4 7.4 10.4 Q5.8 10.4 5.8 9" fill="none" stroke="#2a5a9a" stroke-width="1.6"/></g></svg>
<div class="t ui" style="left:115.3px;top:434.5px;">GetinputFromKeyboard.java</div>
<svg style="left:76.5px;top:462.5px" width="9" height="15"><path d="M0.7 1 L6.8 6.8 L0.7 12.6Z" fill="none" stroke="#000" stroke-width="1.2"/></svg>
<svg style="left:95px;top:462px" width="16" height="16" viewBox="0 0 16 16" ><g transform="translate(0,1)"><path d="M3.5 0.5 H10.5 L13.5 3.5 V13.5 H3.5Z" fill="#e6eefa" stroke="#b09050" stroke-width="1"/><path d="M10.5 0.5 V3.5 H13.5" fill="#f4e8c8" stroke="#b09050" stroke-width="0.8"/><path d="M9.2 3.5 V8.6 Q9.2 10.4 7.4 10.4 Q5.8 10.4 5.8 9" fill="none" stroke="#2a5a9a" stroke-width="1.6"/></g><rect x="0" y="8.5" width="7" height="7.5" fill="#e04050"/><path d="M1.6 10.4 L5.4 14.2 M5.4 10.4 L1.6 14.2" stroke="#fff" stroke-width="1.3"/></svg>
<div class="t ui" style="left:115.3px;top:462.5px;">GetInputFromKeyboard.java</div>
<svg style="left:76.5px;top:490.5px" width="9" height="15"><path d="M0.7 1 L6.8 6.8 L0.7 12.6Z" fill="none" stroke="#000" stroke-width="1.2"/></svg>
<svg style="left:95px;top:490px" width="16" height="16" viewBox="0 0 16 16" ><g transform="translate(0,1)"><path d="M3.5 0.5 H10.5 L13.5 3.5 V13.5 H3.5Z" fill="#e6eefa" stroke="#b09050" stroke-width="1"/><path d="M10.5 0.5 V3.5 H13.5" fill="#f4e8c8" stroke="#b09050" stroke-width="0.8"/><path d="M9.2 3.5 V8.6 Q9.2 10.4 7.4 10.4 Q5.8 10.4 5.8 9" fill="none" stroke="#2a5a9a" stroke-width="1.6"/></g></svg>
<div class="t ui" style="left:115.3px;top:490.5px;">HelloWorld.java</div>
<svg style="left:36.5px;top:518.5px" width="9" height="15"><path d="M0.7 1 L6.8 6.8 L0.7 12.6Z" fill="none" stroke="#000" stroke-width="1.2"/></svg>
<svg style="left:55px;top:518px" width="16" height="16" viewBox="0 0 16 16" ><rect x="1" y="2.5" width="10" height="2.4" fill="#2a6aa8"/><rect x="2" y="5.2" width="9" height="2.8" fill="#2e9a6a"/><rect x="1" y="8.3" width="11" height="4" fill="#d88848" stroke="#b06020" stroke-width="0.6"/><path d="M11.5 0.5 L13 3 L15.5 12.5 H13.5 L12 5 L10.5 2Z" fill="#f0b828" stroke="#c08a10" stroke-width="0.6"/></svg>
<div class="t ui" style="left:75.3px;top:518.5px;">JRE System Library <span style="color:#8a7a3c">[JavaSE-1.6]</span></div>
<svg style="left:35px;top:546px" width="16" height="16" viewBox="0 0 16 16" ><path d="M5 2.5 Q7.5 -0.5 10 2.5" fill="#f8dcc0" stroke="#c09070" stroke-width="0.8"/><path d="M0.5 2.5 H15.5 L14.5 4.5 V13.5 H1.5 V4.5Z" fill="#a8c4f4" stroke="#3a5cc0" stroke-width="1"/></svg>
<div class="t ui" style="left:55.3px;top:546.5px;">Java</div>
<svg style="left:16.5px;top:574.5px" width="9" height="15"><path d="M0.7 1 L6.8 6.8 L0.7 12.6Z" fill="none" stroke="#000" stroke-width="1.2"/></svg>
<svg style="left:35px;top:574px" width="16" height="16" viewBox="0 0 16 16" ><path d="M2.8 4 L4.3 2.2 H8.3 L9.8 4" fill="#fdf0c0" stroke="#c8a050" stroke-width="0.9"/><rect x="2" y="4" width="9.5" height="4.3" fill="#fce8a0"/><path d="M0.3 4 H2.8 M1.3 4 V8.3 M9.8 4 H10.6" stroke="#6a60a0" stroke-width="0.9" fill="none"/><path d="M0.5 8.4 H15.6 L12 13.4 H0.5Z" fill="#8cbcf8" stroke="#2a40b0" stroke-width="0.9"/><path d="M1 8.9 H14.6 L13.2 10.8 H1Z" fill="#b4d8ff"/><path d="M14.3 0.3 V4.6 Q14.3 6.2 12.9 6.2 Q11.7 6.2 11.6 5" fill="none" stroke="#2a6aa0" stroke-width="1.15"/><rect x="0" y="8.5" width="7" height="7.5" fill="#e04050"/><path d="M1.6 10.4 L5.4 14.2 M5.4 10.4 L1.6 14.2" stroke="#fff" stroke-width="1.3"/></svg>
<div class="t ui" style="left:55.3px;top:574.5px;">sitepu</div>
<svg style="left:16.5px;top:602.5px" width="9" height="15"><path d="M0.7 1 L6.8 6.8 L0.7 12.6Z" fill="none" stroke="#000" stroke-width="1.2"/></svg>
<svg style="left:35px;top:602px" width="16" height="16" viewBox="0 0 16 16" ><path d="M2.8 4 L4.3 2.2 H8.3 L9.8 4" fill="#fdf0c0" stroke="#c8a050" stroke-width="0.9"/><rect x="2" y="4" width="9.5" height="4.3" fill="#fce8a0"/><path d="M0.3 4 H2.8 M1.3 4 V8.3 M9.8 4 H10.6" stroke="#6a60a0" stroke-width="0.9" fill="none"/><path d="M0.5 8.4 H15.6 L12 13.4 H0.5Z" fill="#8cbcf8" stroke="#2a40b0" stroke-width="0.9"/><path d="M1 8.9 H14.6 L13.2 10.8 H1Z" fill="#b4d8ff"/><path d="M14.3 0.3 V4.6 Q14.3 6.2 12.9 6.2 Q11.7 6.2 11.6 5" fill="none" stroke="#2a6aa0" stroke-width="1.15"/><rect x="0" y="8.5" width="7" height="7.5" fill="#e04050"/><path d="M1.6 10.4 L5.4 14.2 M5.4 10.4 L1.6 14.2" stroke="#fff" stroke-width="1.3"/></svg>
<div class="t ui" style="left:55.3px;top:602.5px;">tes</div>
<div class="" style="left:12px;top:684px;width:320px;height:16px;background:#000;"></div><div class="" style="left:35px;top:687px;width:276px;height:10px;background:#fff;"></div><div class="" style="left:13px;top:685px;width:20px;height:14px;background:#ccccff;border:2px solid #9c9c9c;outline:1px solid #000;"></div><svg style="left:0;top:0" width="1366" height="768"><path d="M24.5 689.0 L21.0 692.0 L24.5 695.0Z" fill="#9a9aa6"/></svg><div class="" style="left:305px;top:687px;width:6px;height:10px;background:#b9b98f;border-left:1px solid #000;"></div><div class="" style="left:313px;top:687px;width:16px;height:10px;background:#fff;"></div><svg style="left:320px;top:689px" width="4" height="7"><path d="M0 0 L4 3.5 L0 7Z" fill="#000"/></svg>
<svg style="left:13px;top:125px" width="11" height="13" viewBox="0 0 11 13" ><path d="M1 0 V13 M1 3.5 H4 M1 9.5 H4" stroke="#5a6a7a" stroke-width="1" fill="none"/><rect x="4.5" y="1" width="5.5" height="5" fill="#f0c890" stroke="#a05820" stroke-width="0.9"/><rect x="4.5" y="7" width="5.5" height="5" fill="#f0c890" stroke="#a05820" stroke-width="0.9"/><path d="M7.2 1 V6 M4.5 3.5 H10 M7.2 7 V12 M4.5 9.5 H10" stroke="#a05820" stroke-width="0.7"/></svg><svg style="left:163px;top:126px" width="11" height="11" viewBox="0 0 11 11" ><path d="M0.6 0.6 H2.6 L5 3 L7.4 0.6 H9.4 V2.6 L7 5 L9.4 7.4 V9.4 H7.4 L5 7 L2.6 9.4 H0.6 V7.4 L3 5 L0.6 2.6Z" fill="#fff" stroke="#000" stroke-width="1.15" stroke-linejoin="miter"/></svg><svg style="left:205px;top:125px" width="14" height="14" viewBox="0 0 14 14" ><rect x="0.5" y="0.5" width="9" height="9" fill="#e4ecf8" stroke="#8aa0c8"/><rect x="3.5" y="3.5" width="9.5" height="10" fill="#f4f8ff" stroke="#8aa0c8"/><rect x="5.5" y="7.8" width="5.5" height="1.4" fill="#1a4a9a"/></svg><svg style="left:229px;top:124px" width="16" height="16" viewBox="0 0 16 16" ><path d="M0.8 4.5 L5.5 0.8 V3 H12 V6 H5.5 V8.2Z" fill="#fce898" stroke="#d09018" stroke-width="1"/><path d="M15.2 11.5 L10.5 7.8 V10 H4 V13 H10.5 V15.2Z" fill="#fce898" stroke="#d09018" stroke-width="1"/></svg><svg style="left:263px;top:125px" width="12" height="6" viewBox="0 0 12 6" ><path d="M1 0.7 H11 L6 5.2Z" fill="#fff" stroke="#000" stroke-width="1.2"/></svg><svg style="left:287px;top:127px" width="10" height="4" viewBox="0 0 10 4" ><rect x="0.5" y="0.5" width="9" height="3" fill="#fff" stroke="#000" stroke-width="1"/></svg><svg style="left:313px;top:127px" width="10" height="10" viewBox="0 0 10 10" ><rect x="0.5" y="0.5" width="9" height="9" fill="#fff" stroke="#000" stroke-width="1"/><path d="M1.6 2.4 H8.4" stroke="#000" stroke-width="0.9"/></svg>
<div class="" style="left:349px;top:117px;width:1013px;height:439px;background:#e0e0e0;border:1px solid #fff;border-radius:7px;"></div>
<div class="" style="left:350px;top:118px;width:1011px;height:30px;background:#fff;border-radius:6px 6px 0 0;"></div>
<div class="" style="left:350px;top:147px;width:1011px;height:1px;background:#e2e2e2;"></div>
<div class="" style="left:6px;top:147px;width:332px;height:1px;background:#e2e2e2;"></div>
<div class="" style="left:356px;top:148px;width:999px;height:401px;background:#fff;"></div>
<div class="t dj" style="left:374px;top:125.2px;font-size:14.6px;color:#8a8a8a;">GetInputFromKey</div>
<svg style="left:354px;top:125px" width="16" height="16" viewBox="0 0 16 16" ><path d="M3.5 0.5 H10.5 L13.5 3.5 V13.5 H3.5Z" fill="#f2f6fc" stroke="#d8c8a0" stroke-width="1"/><path d="M10.5 0.5 V3.5 H13.5" fill="#f4e8c8" stroke="#d8c8a0" stroke-width="0.8"/><path d="M9.2 3.5 V8.6 Q9.2 10.4 7.4 10.4 Q5.8 10.4 5.8 9" fill="none" stroke="#8aa8d0" stroke-width="1.6"/><g transform="translate(0,-1.3)"><rect x="0" y="8.5" width="7" height="7.5" fill="#f0a0a8"/><path d="M1.6 10.4 L5.4 14.2 M5.4 10.4 L1.6 14.2" stroke="#fff" stroke-width="1.3"/></g></svg>
<div class="t dj" style="left:549px;top:125.2px;font-size:14.6px;color:#8a8a8a;">ArraySample.jav</div>
<svg style="left:528.5px;top:125px" width="16" height="16" viewBox="0 0 16 16" ><path d="M3.5 0.5 H10.5 L13.5 3.5 V13.5 H3.5Z" fill="#f2f6fc" stroke="#d8c8a0" stroke-width="1"/><path d="M10.5 0.5 V3.5 H13.5" fill="#f4e8c8" stroke="#d8c8a0" stroke-width="0.8"/><path d="M9.2 3.5 V8.6 Q9.2 10.4 7.4 10.4 Q5.8 10.4 5.8 9" fill="none" stroke="#8aa8d0" stroke-width="1.6"/></svg>
<div class="t dj" style="left:719px;top:125.2px;font-size:14.6px;color:#8a8a8a;">ArraySample3.ja</div>
<svg style="left:699.5px;top:125px" width="16" height="16" viewBox="0 0 16 16" ><path d="M3.5 0.5 H10.5 L13.5 3.5 V13.5 H3.5Z" fill="#f2f6fc" stroke="#d8c8a0" stroke-width="1"/><path d="M10.5 0.5 V3.5 H13.5" fill="#f4e8c8" stroke="#d8c8a0" stroke-width="0.8"/><path d="M9.2 3.5 V8.6 Q9.2 10.4 7.4 10.4 Q5.8 10.4 5.8 9" fill="none" stroke="#8aa8d0" stroke-width="1.6"/></svg>
<div class="t dj" style="left:889px;top:125.2px;font-size:14.6px;color:#8a8a8a;">Fromkeyboard.ja</div>
<svg style="left:869px;top:125px" width="16" height="16" viewBox="0 0 16 16" ><path d="M3.5 0.5 H10.5 L13.5 3.5 V13.5 H3.5Z" fill="#f2f6fc" stroke="#d8c8a0" stroke-width="1"/><path d="M10.5 0.5 V3.5 H13.5" fill="#f4e8c8" stroke="#d8c8a0" stroke-width="0.8"/><path d="M9.2 3.5 V8.6 Q9.2 10.4 7.4 10.4 Q5.8 10.4 5.8 9" fill="none" stroke="#8aa8d0" stroke-width="1.6"/></svg>
<div class="" style="left:1037px;top:118px;width:176px;height:30px;background:linear-gradient(#ececec,#fff);border-radius:8px 8px 0 0;box-shadow:0 0 0 1px #e4e4e4;"></div>
<svg style="left:1040px;top:125px" width="16" height="16" viewBox="0 0 16 16" ><path d="M3.5 0.5 H10.5 L13.5 3.5 V13.5 H3.5Z" fill="#e6eefa" stroke="#b09050" stroke-width="1"/><path d="M10.5 0.5 V3.5 H13.5" fill="#f4e8c8" stroke="#b09050" stroke-width="0.8"/><path d="M9.2 3.5 V8.6 Q9.2 10.4 7.4 10.4 Q5.8 10.4 5.8 9" fill="none" stroke="#2a5a9a" stroke-width="1.6"/></svg>
<div class="t dj" style="left:1061.3px;top:125.2px;font-size:14.6px;">GetinputFromKey</div>
<div class="bb" style="left:1222px;top:119px;width:34px;height:26px;"></div>
<div class="bb" style="left:1302px;top:119px;width:52px;height:26px;"></div>
<svg style="left:1193px;top:126px" width="11" height="11" viewBox="0 0 11 11" ><path d="M0.6 0.6 H2.6 L5 3 L7.4 0.6 H9.4 V2.6 L7 5 L9.4 7.4 V9.4 H7.4 L5 7 L2.6 9.4 H0.6 V7.4 L3 5 L0.6 2.6Z" fill="#fff" stroke="#000" stroke-width="1.15" stroke-linejoin="miter"/></svg><svg style="left:1310px;top:127px" width="10" height="4" viewBox="0 0 10 4" ><rect x="0.5" y="0.5" width="9" height="3" fill="#fff" stroke="#000" stroke-width="1"/></svg><svg style="left:1336px;top:127px" width="10" height="10" viewBox="0 0 10 10" ><rect x="0.5" y="0.5" width="9" height="9" fill="#fff" stroke="#000" stroke-width="1"/><path d="M1.6 2.4 H8.4" stroke="#000" stroke-width="0.9"/></svg><div class="t dj" style="left:1228.4px;top:121.9px;font-size:12px;font-weight:bold;letter-spacing:-0.4px;">»</div><div class="t dj" style="left:1236.5px;top:129.8px;font-size:9.5px;">12</div>
<div class="" style="left:356px;top:148px;width:12px;height:401px;background:#f6f6f6;"></div>
<div class="" style="left:356px;top:199px;width:12px;height:255px;background:#9d9d85;background-image:repeating-conic-gradient(#38380a 0 25%,#fdfdf6 0 50%);background-size:2px 2px;border-top:1px solid #38380a;border-bottom:1px solid #38380a;"></div>
<div class="" style="left:370px;top:148px;width:16px;height:381px;background:#fff;"></div>
<div class="" style="left:376px;top:148px;width:10px;height:381px;background:#f8f8f8;"></div>
<div class="" style="left:388px;top:199px;width:935px;height:17px;background:#e8f2fe;"></div>
<div class="" style="left:1342px;top:148px;width:13px;height:401px;background:#f6f6f6;"></div>
<div class="" style="left:356px;top:530px;width:30px;height:19px;background:#f8f8f8;"></div>
<div class="" style="left:1344px;top:205px;width:9px;height:5px;background:#f8f8f8;border:1px solid #dadada;"></div>
<div class="t mono" style="left:388px;top:148.4px;line-height:17px;height:17px;"><span class="kw">import </span>java.io.BufferedReader;</div>
<div class="t mono" style="left:388px;top:165.4px;line-height:17px;height:17px;"><span class="kw">import </span>java.io.IOException;</div>
<div class="t mono" style="left:388px;top:182.4px;line-height:17px;height:17px;"><span class="kw">import </span>java.io.InputStreamReader;</div>
<div class="t mono" style="left:388px;top:199.4px;line-height:17px;height:17px;"><span class="kw">public </span><span class="kw">class </span><span style="background:#d4d4d4">GetinputFromKeyboard</span></div>
<div class="t mono" style="left:388px;top:216.4px;line-height:17px;height:17px;">{</div>
<div class="t mono" style="left:388px;top:233.4px;line-height:17px;height:17px;"><span class="kw">public </span><span class="kw">static </span><span class="kw">void </span>main( String[] args ){</div>
<div class="t mono" style="left:388px;top:250.4px;line-height:17px;height:17px;">BufferedReader dataIn = <span class="kw">new </span>BufferedReader(<span class="kw">new </span>InputStreamReader(</div>
<div class="t mono" style="left:388px;top:267.4px;line-height:17px;height:17px;">System.<span class="fi">in</span>) );</div>
<div class="t mono" style="left:388px;top:284.4px;line-height:17px;height:17px;">String name = <span class="st">""</span>;</div>
<div class="t mono" style="left:388px;top:301.4px;line-height:17px;height:17px;">System.<span class="fi">out</span>.print(<span class="st">"Please Enter Your Name:"</span>);</div>
<div class="t mono" style="left:388px;top:318.4px;line-height:17px;height:17px;"><span class="kw">try</span>{</div>
<div class="t mono" style="left:388px;top:335.4px;line-height:17px;height:17px;">name = dataIn.readLine();</div>
<div class="t mono" style="left:388px;top:352.4px;line-height:17px;height:17px;">}<span class="kw">catch</span>( IOException e ){</div>
<div class="t mono" style="left:388px;top:369.4px;line-height:17px;height:17px;">System.<span class="fi">out</span>.println(<span class="st">"Error!"</span>);</div>
<div class="t mono" style="left:388px;top:386.4px;line-height:17px;height:17px;">}</div>
<div class="t mono" style="left:388px;top:403.4px;line-height:17px;height:17px;">System.<span class="fi">out</span>.println(<span class="st">"Hello " </span>+ name +<span class="st">"!"</span>);</div>
<div class="t mono" style="left:388px;top:420.4px;line-height:17px;height:17px;">}</div>
<div class="t mono" style="left:388px;top:437.4px;line-height:17px;height:17px;">}</div>
<div class="" style="left:1326px;top:148px;width:16px;height:382px;background:#000;"></div><div class="" style="left:1329px;top:171px;width:10px;height:336px;background:#fff;"></div><div class="" style="left:1327px;top:149px;width:14px;height:20px;background:#ccccff;border:2px solid #9c9c9c;outline:1px solid #000;"></div><svg style="left:0;top:0" width="1366" height="768"><path d="M1331.0 160.5 L1334.0 157.0 L1337.0 160.5Z" fill="#9a9aa6"/></svg><div class="" style="left:1327px;top:509px;width:14px;height:20px;background:#ccccff;border:2px solid #9c9c9c;outline:1px solid #000;"></div><svg style="left:0;top:0" width="1366" height="768"><path d="M1331.0 517.5 L1334.0 521.0 L1337.0 517.5Z" fill="#9a9aa6"/></svg>
<div class="" style="left:386px;top:533px;width:937px;height:16px;background:#000;"></div><div class="" style="left:409px;top:536px;width:891px;height:10px;background:#fff;"></div><div class="" style="left:387px;top:534px;width:20px;height:14px;background:#ccccff;border:2px solid #9c9c9c;outline:1px solid #000;"></div><svg style="left:0;top:0" width="1366" height="768"><path d="M398.5 538.0 L395.0 541.0 L398.5 544.0Z" fill="#9a9aa6"/></svg><div class="" style="left:1302px;top:534px;width:20px;height:14px;background:#ccccff;border:2px solid #9c9c9c;outline:1px solid #000;"></div><svg style="left:0;top:0" width="1366" height="768"><path d="M1310.5 538.0 L1314.0 541.0 L1310.5 544.0Z" fill="#9a9aa6"/></svg>
<svg style="left:375.4px;top:150.6px" width="10" height="10" viewBox="0 0 10 10" ><circle cx="5" cy="5" r="4.2" fill="#eaf1fa" stroke="#a4bcdc" stroke-width="0.9"/><rect x="2.7" y="4.5" width="4.6" height="1" fill="#6a88b0"/></svg><svg style="left:375.4px;top:235.6px" width="10" height="10" viewBox="0 0 10 10" ><circle cx="5" cy="5" r="4.2" fill="#eaf1fa" stroke="#a4bcdc" stroke-width="0.9"/><rect x="2.7" y="4.5" width="4.6" height="1" fill="#6a88b0"/></svg><svg style="left:380px;top:161px" width="5" height="37" viewBox="0 0 5 37" ><path d="M0.7 0 V35.3 H3.5" fill="none" stroke="#a8a8a8" stroke-width="1"/></svg>
<svg style="left:590px;top:313px" width="22" height="28" viewBox="0 0 22 28" ><defs><filter id="cb" x="-50%" y="-50%" width="200%" height="200%"><feGaussianBlur stdDeviation="1.1"/></filter></defs><path d="M2.5 3 L2.5 23.5 L8 21 L10.6 24.8 L11.6 21.9 L16.4 19Z" fill="#000" opacity="0.55" filter="url(#cb)"/><path d="M0.2 0.5 L0.2 22.3 L6 19.7 L8.6 23.3 L9.6 20.4 L14.2 17.5Z" fill="#4a7af4"/><path d="M0.2 0.5 L0.2 22.3 L5.2 20 Z" fill="#2f5fe0"/><path d="M0.2 0.5 L6 19.7 L8.6 23.3 L8.2 18Z" fill="#1a3eb8"/></svg>
<div class="" style="left:349px;top:564px;width:1013px;height:143px;background:#e0e0e0;border:1px solid;border-color:#b4b4b4 #c4c4c4 #c8c8c8 #bcbcbc;border-radius:7px;"></div>
<div class="" style="left:350px;top:565px;width:1011px;height:28px;background:#dedede;border-radius:6px 6px 0 0;border-bottom:1px solid #b8b8b8;"></div>
<div class="" style="left:646px;top:564px;width:108px;height:29px;background:#fff;border-radius:6px 6px 0 0;border:1px solid #b0b0b0;border-bottom:none;"></div>
<div class="" style="left:356px;top:595px;width:999px;height:106px;background:#fff;"></div>
<div class="t dj" style="left:374px;top:571.8px;font-size:14.6px;">Problems</div>
<div class="t dj" style="left:470.8px;top:571.8px;font-size:14.6px;">Javadoc</div>
<div class="t dj" style="left:557px;top:571.8px;font-size:14.6px;">Declaration</div>
<div class="t dj" style="left:670.3px;top:571.8px;font-size:14.6px;">Console</div>
<div class="t ui" style="left:357px;top:597px;font-size:14.39px;">&lt;terminated&gt; GetinputFromKeyboard [Java Application] /usr/lib/jvm/java-6-openjdk-i386/bin/java (Feb 1, 2014 11:13:19 AM)</div>
<div class="" style="left:359px;top:614px;width:980px;height:1px;background:#000;"></div>
<div class="t mono" style="left:358px;top:615px;line-height:17px;">Please Enter Your Name:<span style="color:#00c87d">Andre</span></div>
<div class="t mono" style="left:358px;top:632px;line-height:17px;">Hello Andre!</div>
<div class="" style="left:358px;top:633px;width:1px;height:15px;background:#000;"></div>
<div class="bb" style="left:982px;top:566px;width:372px;height:26px;"></div>
<div class="" style="left:1339px;top:615px;width:16px;height:66px;background:#000;"></div><div class="" style="left:1342px;top:638px;width:10px;height:20px;background:#fff;"></div><div class="" style="left:1340px;top:616px;width:14px;height:20px;background:#ccccff;border:2px solid #9c9c9c;outline:1px solid #000;"></div><svg style="left:0;top:0" width="1366" height="768"><path d="M1344.0 627.5 L1347.0 624.0 L1350.0 627.5Z" fill="#9a9aa6"/></svg><div class="" style="left:1340px;top:660px;width:14px;height:20px;background:#ccccff;border:2px solid #9c9c9c;outline:1px solid #000;"></div><svg style="left:0;top:0" width="1366" height="768"><path d="M1344.0 668.5 L1347.0 672.0 L1350.0 668.5Z" fill="#9a9aa6"/></svg>
<div class="" style="left:356px;top:685px;width:980px;height:16px;background:#000;"></div><div class="" style="left:379px;top:688px;width:934px;height:10px;background:#fff;"></div><div class="" style="left:357px;top:686px;width:20px;height:14px;background:#ccccff;border:2px solid #9c9c9c;outline:1px solid #000;"></div><svg style="left:0;top:0" width="1366" height="768"><path d="M368.5 690.0 L365.0 693.0 L368.5 696.0Z" fill="#9a9aa6"/></svg><div class="" style="left:1315px;top:686px;width:20px;height:14px;background:#ccccff;border:2px solid #9c9c9c;outline:1px solid #000;"></div><svg style="left:0;top:0" width="1366" height="768"><path d="M1323.5 690.0 L1327.0 693.0 L1323.5 696.0Z" fill="#9a9aa6"/></svg>
<svg style="left:354px;top:571.5px" width="16" height="15" viewBox="0 0 16 15" ><g transform="scale(1.07)"><rect x="5" y="1" width="8.5" height="11" fill="#f4f4f8" stroke="#9090a0" stroke-width="0.8"/><circle cx="7.5" cy="4" r="2.2" fill="#d83030"/><path d="M10 7 V11 L12.5 12.5" stroke="#8090c0" stroke-width="1.2" fill="none"/><rect x="0" y="6.5" width="6.5" height="7" fill="#e04050"/><path d="M1.5 8.2 L5 11.8 M5 8.2 L1.5 11.8" stroke="#fff" stroke-width="1.2"/></g></svg><div class="t dj" style="left:454px;top:573px;font-size:11.5px;color:#2a5ab0;">@</div><svg style="left:538px;top:572px" width="14" height="14" viewBox="0 0 14 14" ><path d="M0.5 0.5 H7 L10 3.5 V12.5 H0.5Z" fill="#fbf6e8" stroke="#b09050" stroke-width="1"/><path d="M3 4 H7 M3 6.5 H6 M3 9 H5" stroke="#7a8ab0" stroke-width="0.9"/><path d="M6 9.5 H10 V7.5 L13.5 10.5 L10 13.5 V11.5 H6Z" fill="#fcd868" stroke="#c89018" stroke-width="0.8"/></svg><svg style="left:652px;top:573px" width="14" height="13" viewBox="0 0 14 13" ><rect x="0.7" y="0.7" width="12.6" height="8.6" fill="#f4f8ff" stroke="#2a50b0" stroke-width="1.4"/><path d="M3 3.5 H10 M3 6 H8" stroke="#3a5a9a" stroke-width="1"/><rect x="4.5" y="9.5" width="5" height="1.6" fill="#2a50b0"/><rect x="2.5" y="11" width="9" height="1.6" fill="#4a70c8"/></svg><svg style="left:735px;top:573px" width="11" height="11" viewBox="0 0 11 11" ><path d="M0.6 0.6 H2.6 L5 3 L7.4 0.6 H9.4 V2.6 L7 5 L9.4 7.4 V9.4 H7.4 L5 7 L2.6 9.4 H0.6 V7.4 L3 5 L0.6 2.6Z" fill="#fff" stroke="#000" stroke-width="1.15" stroke-linejoin="miter"/></svg><svg style="left:0;top:0" width="0" height="0"><defs><pattern id="stpr" width="2" height="2" patternUnits="userSpaceOnUse"><rect width="2" height="2" fill="#ecc0c0"/><rect width="1" height="1" fill="#8c1c1c"/><rect x="1" y="1" width="1" height="1" fill="#8c1c1c"/></pattern></defs></svg><svg style="left:990px;top:574px" width="11" height="11" viewBox="0 0 11 11" ><rect width="11" height="11" rx="1" fill="url(#stpr)"/></svg><svg style="left:1015px;top:573px" width="14" height="13" viewBox="0 0 14 13" ><path d="M2.5 2.5 L11.5 10.5 M11.5 2.5 L2.5 10.5" stroke="#6c6c6c" stroke-width="3.4" stroke-linecap="round"/></svg><svg style="left:1040px;top:570px" width="17" height="17" viewBox="0 0 17 17" ><path d="M2 2 L10 10 M10 2 L2 10" stroke="#9a9a9a" stroke-width="2.4" stroke-linecap="round"/><path d="M6.5 6.5 L14.5 14.5 M14.5 6.5 L6.5 14.5" stroke="#6c6c6c" stroke-width="3.2" stroke-linecap="round"/></svg><svg style="left:1066px;top:571px" width="2" height="16" viewBox="0 0 2 16" ><rect width="1.5" height="15.5" fill="#000"/></svg><svg style="left:1078px;top:571px" width="16" height="16" viewBox="0 0 16 16" ><path d="M0.5 0.5 H7 L10 3.5 V13.5 H0.5Z" fill="#fbf6e0" stroke="#b09050" stroke-width="1"/><path d="M2.5 4 H7 M2.5 6.5 H8 M2.5 9 H6" stroke="#8a9ab8" stroke-width="0.9"/><path d="M9 9 L15 15 M15 9 L9 15" stroke="#404040" stroke-width="2.2"/></svg><svg style="left:1103px;top:571px" width="14" height="16" viewBox="0 0 14 16" ><rect x="8.5" y="0.5" width="5" height="15" fill="#f4f8ff" stroke="#8090b0" stroke-width="0.9"/><rect x="10" y="3" width="2" height="2.4" fill="#4a68a8"/><rect x="10" y="7" width="2" height="2.4" fill="#4a68a8"/><rect x="10" y="11" width="2" height="2.4" fill="#4a68a8"/><rect x="0.5" y="8" width="8.5" height="7" rx="1" fill="#f8c848" stroke="#c08a10" stroke-width="0.9"/><path d="M2.3 8 V5.5 Q2.3 3 4.75 3 Q7.2 3 7.2 5.5 V8" fill="none" stroke="#c08a10" stroke-width="1.3"/><rect x="4.1" y="10" width="1.3" height="3" fill="#705000"/></svg><div style="left:1123px;top:568px;width:54px;height:23px;background:#000"></div><div style="left:1126px;top:569px;width:22px;height:21px;background:#b9b98f"></div><div style="left:1152px;top:569px;width:23px;height:21px;background:#b9b98f"></div><svg style="left:1129px;top:572px" width="17" height="15" viewBox="0 0 17 15" ><rect x="4.5" y="1.5" width="11" height="7.5" fill="#f4f8ff" stroke="#4a6ab8" stroke-width="1.1"/><path d="M7 4 H13 M7 6.3 H11.5" stroke="#4a6ab8" stroke-width="0.9"/><rect x="0.8" y="6.5" width="6.5" height="5" fill="#dce8fc" stroke="#4a6ab8" stroke-width="0.9"/><rect x="2" y="12" width="4.4" height="1.2" fill="#4a6ab8"/><rect x="8" y="10" width="4" height="1.2" fill="#4a6ab8"/></svg><svg style="left:1155px;top:572px" width="17" height="15" viewBox="0 0 17 15" ><rect x="4.5" y="1.5" width="11" height="7.5" fill="#f4f8ff" stroke="#4a6ab8" stroke-width="1.1"/><path d="M7 3.2 L10 6.8 M10 3.2 L7 6.8" stroke="#d82020" stroke-width="1.3"/><path d="M11.5 4 H13.5 M11.5 6.3 H13.5" stroke="#4a6ab8" stroke-width="0.9"/><rect x="0.8" y="6.5" width="6.5" height="5" fill="#dce8fc" stroke="#4a6ab8" stroke-width="0.9"/><rect x="2" y="12" width="4.4" height="1.2" fill="#4a6ab8"/><rect x="8" y="10" width="4" height="1.2" fill="#4a6ab8"/></svg><svg style="left:1181.5px;top:571px" width="2" height="17" viewBox="0 0 2 17" ><rect width="1.5" height="16.5" fill="#000"/></svg><svg style="left:1195px;top:571px" width="16" height="16" viewBox="0 0 16 16" ><rect x="0.5" y="6.5" width="11" height="9" fill="#f4f8ff" stroke="#6a80b8" stroke-width="1"/><rect x="0.5" y="6.5" width="11" height="2.2" fill="#3a60b8"/><path d="M7 10 L10 7" stroke="#444" stroke-width="1"/><path d="M9 5.5 L12.5 1.5 L15 4 L11 7.5Z" fill="#2e9a3e" stroke="#1a6a2a" stroke-width="0.7"/></svg><svg style="left:1220px;top:572px" width="15" height="14" viewBox="0 0 15 14" ><rect x="0.8" y="0.8" width="13.4" height="9.4" fill="#f4f8ff" stroke="#2a50b0" stroke-width="1.6"/><path d="M3.5 4 H11 M3.5 6.8 H9" stroke="#3a5a9a" stroke-width="1"/><rect x="5" y="10.5" width="5" height="1.6" fill="#2a50b0"/><rect x="3" y="12" width="9" height="1.8" fill="#4a70c8"/></svg><svg style="left:1247px;top:578px" width="6" height="3" viewBox="0 0 6 3" ><path d="M0 0 H6 L3 3Z" fill="#000"/></svg><svg style="left:1263px;top:570px" width="17" height="17" viewBox="0 0 17 17" ><rect x="0.5" y="4.5" width="12.5" height="11" fill="#eaf2fc" stroke="#c8a850" stroke-width="1"/><rect x="0.5" y="4.5" width="12.5" height="2.4" fill="#4a78c0"/><path d="M13 9 Q13 14.5 7 15" fill="none" stroke="#e8c040" stroke-width="1.1"/><path d="M13 1 l1.2 2.3 l2.3 1.2 l-2.3 1.2 l-1.2 2.3 l-1.2 -2.3 l-2.3 -1.2 l2.3 -1.2Z" fill="#fffde8" stroke="#c8a018" stroke-width="1"/></svg><svg style="left:1290px;top:578px" width="6" height="3" viewBox="0 0 6 3" ><path d="M0 0 H6 L3 3Z" fill="#000"/></svg><div style="left:1300.5px;top:567px;width:4px;height:25px;background:#000"></div><svg style="left:1310px;top:574px" width="10" height="4" viewBox="0 0 10 4" ><rect x="0.5" y="0.5" width="9" height="3" fill="#fff" stroke="#000" stroke-width="1"/></svg><svg style="left:1336px;top:574px" width="10" height="10" viewBox="0 0 10 10" ><rect x="0.5" y="0.5" width="9" height="9" fill="#fff" stroke="#000" stroke-width="1"/><path d="M1.6 2.4 H8.4" stroke="#000" stroke-width="0.9"/></svg>
<div class="" style="left:0px;top:713px;width:1366px;height:26px;background:#fff;"></div>
<div class="" style="left:0px;top:739px;width:885px;height:4px;background:#dadada;"></div>
<div class="" style="left:1029px;top:742px;width:337px;height:1px;background:#e0e0e0;"></div>
<div class="" style="left:0px;top:743px;width:1366px;height:25px;background:#000;"></div>
<div class="" style="left:885px;top:713px;width:144px;height:30px;background:#fff;border:1px solid #666;border-bottom:none;"></div>
<div class="" style="left:1029px;top:713px;width:15px;height:1px;background:#666;"></div>
<div class="" style="left:952px;top:714px;width:1px;height:29px;background:#666;"></div>
<div class="t ui" style="left:920.5px;top:720.8px;">32M of 67M</div>
<div class="" style="left:599px;top:743px;width:620px;height:25px;background:linear-gradient(#3a3a3a,#1c1c1c 35%,#000 90%);"></div>
<div class="" style="left:402px;top:744px;width:197px;height:24px;background:#2f2f2f;"></div>
<div class="" style="left:1219px;top:743px;width:147px;height:25px;background:#2e2e2e;border-top:1px solid #555;"></div>
<div class="" style="left:1219px;top:744px;width:2px;height:24px;background:#111;"></div>
<div class="" style="left:1291px;top:745px;width:2px;height:22px;background:#3c3c3c;"></div>
<div class="" style="left:1328px;top:745px;width:2px;height:22px;background:#3c3c3c;"></div>
<div class="t ui" style="left:42px;top:749.3px;color:#f0f0f0;">FLASDISK</div>
<div class="t ui" style="left:238px;top:749.3px;color:#f0f0f0;">2.txt (FLASDISK /me…</div>
<div class="t ui" style="left:434px;top:749.3px;color:#f0f0f0;">Java - ITHB/src/Getin…</div>
<div class="" style="left:1221px;top:746px;width:35px;height:20px;background:#e5e5d0;border:1px solid #f4f4e4;"></div>
<svg style="left:1030px;top:719px" width="13" height="17" viewBox="0 0 13 17" ><rect x="1" y="2" width="11" height="2" rx="0.8" fill="#2a5aa8"/><rect x="4.5" y="0.5" width="4" height="2" fill="#3a6ab8"/><path d="M1.5 4.5 H11.5 L10.5 16 H2.5Z" fill="#6a9ad8" stroke="#2a5aa8" stroke-width="0.9"/><path d="M4.2 6 V14.5 M6.5 6 V14.5 M8.8 6 V14.5" stroke="#e8d890" stroke-width="1"/></svg><svg style="left:1045.5px;top:717px" width="2" height="23" viewBox="0 0 2 23" ><path d="M0.8 0 V23" stroke="#b8aa88" stroke-width="1.5" stroke-dasharray="2.2 2.2"/></svg><svg style="left:22px;top:747px" width="9" height="17" viewBox="0 0 9 17" ><rect x="2" y="0" width="5" height="3" fill="#c8c8c8"/><rect x="0.5" y="2.5" width="8" height="12" rx="1.2" fill="#d82020"/><rect x="2" y="14" width="5" height="2.5" fill="#888"/><path d="M4.5 5 V11 M3 6.5 L4.5 5 L6 6.5" stroke="#fff" stroke-width="0.8" fill="none"/></svg><svg style="left:216px;top:748px" width="14" height="15" viewBox="0 0 14 15" ><path d="M1 1.5 L11 0.5 L13 3 L12.5 14 L1.5 14.5Z" fill="#e4e4e4" stroke="#b0b0b0" stroke-width="0.7"/><path d="M3 5 H10 M3 7.5 H10 M3 10 H9" stroke="#c0c0c0" stroke-width="0.8"/></svg><svg style="left:409.5px;top:748px" width="16" height="16" viewBox="0 0 16 16" ><circle cx="8" cy="8" r="7.8" fill="#8acc20"/><circle cx="8" cy="8" r="7" fill="none" stroke="#c8ee60" stroke-width="0.8"/><path d="M6.5 3.5 Q4.5 5 5.8 8 Q4.5 11 6.5 12.5 M9.5 3.5 Q11.5 5 10.2 8 Q11.5 11 9.5 12.5" fill="none" stroke="#1a3a00" stroke-width="1.6"/></svg><svg style="left:1230.5px;top:748.5px" width="16" height="16" viewBox="0 0 16 16" ><circle cx="8" cy="8" r="7.8" fill="#8acc20"/><circle cx="8" cy="8" r="7" fill="none" stroke="#c8ee60" stroke-width="0.8"/><path d="M6.5 3.5 Q4.5 5 5.8 8 Q4.5 11 6.5 12.5 M9.5 3.5 Q11.5 5 10.2 8 Q11.5 11 9.5 12.5" fill="none" stroke="#1a3a00" stroke-width="1.6"/></svg></body></html>
